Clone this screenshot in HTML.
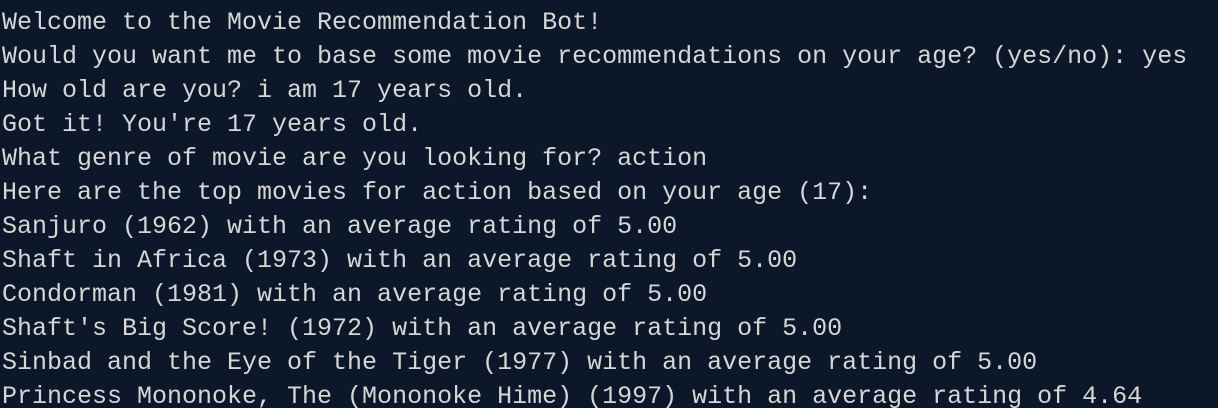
<!DOCTYPE html>
<html><head><meta charset="utf-8"><style>
html,body{margin:0;padding:0;background:#0c1829;width:1218px;height:408px;overflow:hidden}
pre{margin:0;padding:6px 0 0 2px;font-family:"Liberation Mono","DejaVu Sans Mono",monospace;font-size:25px;line-height:34px;color:#d6d6d6;white-space:pre}
</style></head><body><pre>Welcome to the Movie Recommendation Bot!
Would you want me to base some movie recommendations on your age? (yes/no): yes
How old are you? i am 17 years old.
Got it! You're 17 years old.
What genre of movie are you looking for? action
Here are the top movies for action based on your age (17):
Sanjuro (1962) with an average rating of 5.00
Shaft in Africa (1973) with an average rating of 5.00
Condorman (1981) with an average rating of 5.00
Shaft's Big Score! (1972) with an average rating of 5.00
Sinbad and the Eye of the Tiger (1977) with an average rating of 5.00
Princess Mononoke, The (Mononoke Hime) (1997) with an average rating of 4.64</pre></body></html>
